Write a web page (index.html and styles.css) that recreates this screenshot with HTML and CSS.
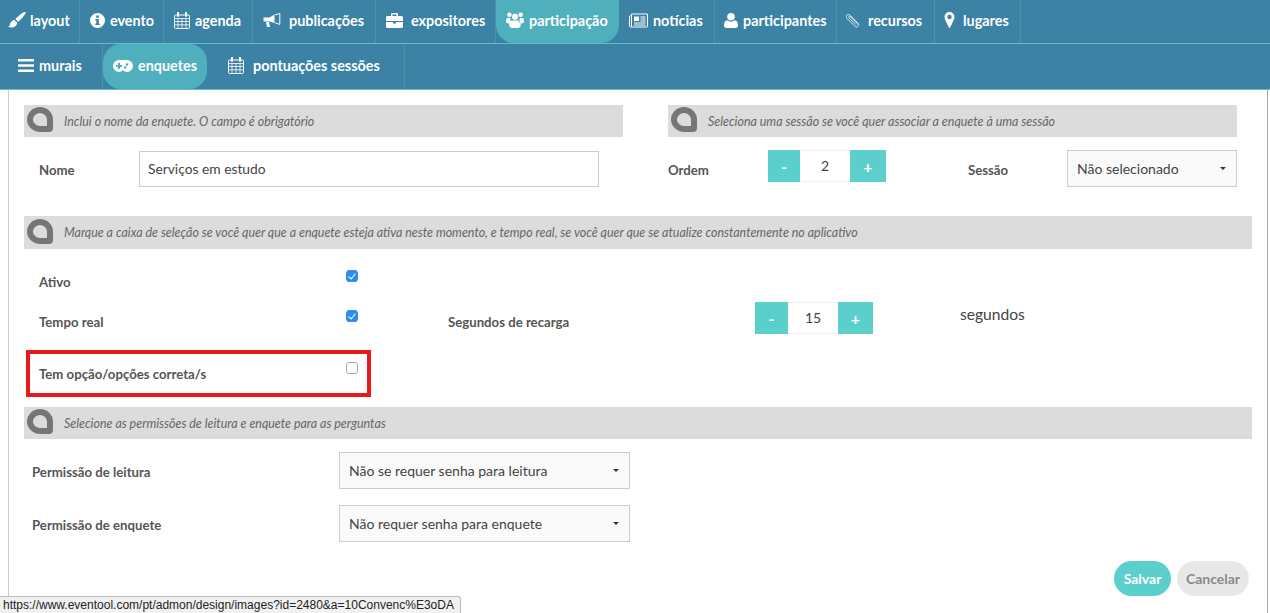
FILE: index.html
```html
<!DOCTYPE html>
<html lang="pt">
<head>
<meta charset="utf-8">
<title>Enquetes</title>
<link rel="stylesheet" href="styles.css">
</head>
<body>
<header>
<nav class="nav nav-main">
<a class="item"><svg class="ic" width="18" height="18" viewBox="0 0 18 18"><path d="M17.600 1.100c.5.500-.6 2.400-2.200 4.400L10.300 10.900 7.300 8.100 12.800 3C15 1.200 17 .5 17.600 1.100zM6.400 9l2.800 2.700c-.3 2.200-1.700 4.100-4.400 4.700-1.500.3-3.400.2-4.800-.6.900-.3 1.500-.8 1.800-1.800.5-1.700.8-4.200 4.600-5z" fill="#fff"/></svg><span>layout</span></a>
<a class="item"><svg class="ic" width="15" height="15" viewBox="0 0 15 15"><path fill-rule="evenodd" d="M7.500 0a7.500 7.500 0 1 1 0 15 7.500 7.500 0 0 1 0-15zM6.200 2.500v2.200h2.600V2.500zM5.300 6v1.400h1v3.200h-1V12h4.400v-1.400h-.9V6z" fill="#fff"/></svg><span>evento</span></a>
<a class="item"><svg class="ic" width="16" height="17" viewBox="0 0 16 17" fill="none" stroke="#fff"><rect x=".5" y="3" width="15" height="13.500" rx="1.200" stroke-width="1"/><path d="M.5 6.500h15M.5 9.500h15M.5 12.800h15M4 6.500v10M8 6.500v10M12 6.500v10" stroke-width=".8"/><path d="M4 .8v3.200M12 .8v3.200" stroke-width="2" stroke-linecap="round"/></svg><span>agenda</span></a>
<a class="item gap-wide"><svg class="ic" width="18" height="15" viewBox="0 0 17 15"><path d="M0 4.500h6L11 1.500v8.500L6 8.500H0zM2.500 9h3l1 5H3.500z" fill="#fff"/><path d="M11.500 1.800 16.300.6v10.800l-4.800-1.600" fill="none" stroke="#fff" stroke-width="1"/></svg><span>publicações</span></a>
<a class="item gap-wide"><svg class="ic" width="17" height="15" viewBox="0 0 17 15"><path fill-rule="evenodd" d="M5 3V1.300C5 .6 5.600 0 6.300 0h4.400c.7 0 1.300.6 1.300 1.300V3h3.500c.8 0 1.500.7 1.500 1.500V8H0V4.500C0 3.700.7 3 1.500 3zM6.400 1.400V3h4.200V1.400z" fill="#fff"/><path d="M0 9h7v1.500h3V9h7v4.500c0 .8-.7 1.500-1.500 1.500h-14C.7 15 0 14.300 0 13.500z" fill="#fff"/></svg><span>expositores</span></a>
<a class="item active"><svg class="ic" width="18" height="16" viewBox="0 0 18 16" fill="#fff"><circle cx="3.400" cy="2.800" r="2.300"/><circle cx="14.600" cy="2.800" r="2.300"/><circle cx="9" cy="4.800" r="3"/><path d="M0 9c0-2 .8-3 2-3h2.200c-.2 1.800.6 3 1.600 3.800C4.200 10.300 3 11 2.700 11.500 1 11.500 0 10.800 0 9zM18 9c0-2-.8-3-2-3h-2.200c.2 1.800-.6 3-1.600 3.800 1.600.5 2.800 1.200 3.100 1.700 1.700 0 2.700-.7 2.700-2.500zM6 8.600h6c1.800 0 2.800 1.500 2.800 4 0 2-1.200 3.400-2.800 3.400H6c-1.600 0-2.800-1.400-2.800-3.400 0-2.500 1-4 2.800-4z"/></svg><span>participação</span></a>
<a class="item"><svg class="ic" width="19" height="15" viewBox="0 0 19 15" fill="none" stroke="#fff"><path d="M2.500 1h16v12.500c0 .3-.2.5-.5.500H2M2.500 1v12c0 .6-.4 1-1 1s-1-.4-1-1V3h2" stroke-width="1"/><path d="M5 3.500h5v4.500H5z" fill="#fff" stroke="none"/><path d="M11.500 4h5M11.500 6h5M11.500 8h5M5 10h11.500M5 12h11.500" stroke-width="1"/></svg><span>notícias</span></a>
<a class="item"><svg class="ic" width="14" height="15" viewBox="0 0 14 15" fill="#fff"><circle cx="7" cy="3.800" r="3.800"/><path d="M3.300 7.300C4.300 8.200 5.600 8.700 7 8.700s2.700-.5 3.700-1.400c2.100.3 3.300 2.200 3.300 5 0 1.700-1 2.700-2.500 2.700h-9C1 15 0 14 0 12.300c0-2.800 1.200-4.700 3.300-5z"/></svg><span>participantes</span></a>
<a class="item gap-wide"><svg class="ic" width="14" height="15" viewBox="0 0 15 15"><path d="M13.800 11.700 4.500 2C3.300.8 1.800.8.900 1.800-.1 2.800 0 4.200 1.200 5.400l8.300 8.300c.9.900 2.300 1 3.100.2.800-.8.700-2.100-.2-3L4.800 3.400c-.5-.5-1.200-.6-1.600-.2-.4.400-.3 1 .2 1.500l7 7.100" fill="none" stroke="#fff" stroke-width=".9"/></svg><span>recursos</span></a>
<a class="item gap-wide"><svg class="ic" width="11" height="16" viewBox="0 0 10 16"><path fill-rule="evenodd" d="M5 0a5 5 0 0 1 5 5c0 1.200-.3 2-.8 3L5.800 15.200c-.3.700-1.300.7-1.600 0L.8 8C.3 7 0 6.200 0 5a5 5 0 0 1 5-5zm0 2.800a2.200 2.200 0 1 0 0 4.400 2.200 2.200 0 0 0 0-4.400z" fill="#fff"/></svg><span>lugares</span></a>
</nav>
<nav class="nav nav-sub">
<a class="item"><svg class="ic" width="16" height="13" viewBox="0 0 16 13" fill="#fff"><rect width="16" height="2.600" rx=".6"/><rect y="5.200" width="16" height="2.600" rx=".6"/><rect y="10.400" width="16" height="2.600" rx=".6"/></svg><span>murais</span></a>
<a class="item active"><svg class="ic" width="20" height="12" viewBox="0 0 20 12"><path fill-rule="evenodd" d="M6 0h8a6 6 0 0 1 0 12c-1.700 0-3-.7-4-2-1 1.300-2.300 2-4 2A6 6 0 0 1 6 0zM5 3v2H3v2h2v2h2V7h2V5H7V3zm9 .3a1.300 1.300 0 1 0 0 2.600 1.300 1.300 0 0 0 0-2.600zm-1.800 2.900a1.300 1.300 0 1 0 0 2.600 1.300 1.300 0 0 0 0-2.600z" fill="#fff"/></svg><span>enquetes</span></a>
<a class="item gap-wide"><svg class="ic" width="16" height="17" viewBox="0 0 16 17" fill="none" stroke="#fff"><rect x=".5" y="3" width="15" height="13.500" rx="1.200" stroke-width="1"/><path d="M.5 6.500h15M.5 9.500h15M.5 12.800h15M4 6.500v10M8 6.500v10M12 6.500v10" stroke-width=".8"/><path d="M4 .8v3.200M12 .8v3.200" stroke-width="2" stroke-linecap="round"/></svg><span>pontuações sessões</span></a>
</nav>
</header>

<main class="panel">
<div class="top-row">
<section>
<p class="bar"><i class="bubble"></i>Inclui o nome da enquete. O campo é obrigatório</p>
<div class="name-row">
<label class="lbl lbl-name">Nome</label>
<input class="text-input" type="text" value="Serviços em estudo">
</div>
</section>
<section>
<p class="bar"><i class="bubble"></i>Seleciona uma sessão se você quer associar a enquete à uma sessão</p>
<div class="order-row">
<label class="lbl lbl-order">Ordem</label>
<div class="stepper"><button class="step step-minus">-</button><span class="step-val">2</span><button class="step step-plus">+</button></div>
<label class="lbl lbl-session">Sessão</label>
<div class="select select-session"><select><option>Não selecionado</option></select></div>
</div>
</section>
</div>

<p class="bar bar-mid"><i class="bubble"></i>Marque a caixa de seleção se você quer que a enquete esteja ativa neste momento, e tempo real, se você quer que se atualize constantemente no aplicativo</p>

<div class="check-row first">
<label class="lbl lbl-check">Ativo</label>
<input class="check" type="checkbox" checked>
</div>
<div class="check-row">
<label class="lbl lbl-check">Tempo real</label>
<input class="check" type="checkbox" checked>
<label class="lbl lbl-reload">Segundos de recarga</label>
<div class="stepper stepper-alt"><button class="step step-minus">-</button><span class="step-val">15</span><button class="step step-plus">+</button></div>
<span class="unit">segundos</span>
</div>
<div class="highlight">
<label class="lbl">Tem opção/opções correta/s</label>
<input class="check" type="checkbox">
</div>

<p class="bar bar-perm"><i class="bubble"></i>Selecione as permissões de leitura e enquete para as perguntas</p>
<div class="perm-row">
<label class="lbl lbl-perm">Permissão de leitura</label>
<div class="select select-perm"><select><option>Não se requer senha para leitura</option></select></div>
</div>
<div class="perm-row second">
<label class="lbl lbl-perm">Permissão de enquete</label>
<div class="select select-perm"><select><option>Não requer senha para enquete</option></select></div>
</div>
<div class="actions">
<button class="btn btn-save">Salvar</button>
<button class="btn btn-cancel">Cancelar</button>
</div>
</main>
<div class="status">https://www.eventool.com/pt/admon/design/images?id=2480&amp;a=10Convenc%E3oDA</div>
</body>
</html>
```

FILE: styles.css
```css
* { box-sizing: border-box; }
html, body { margin: 0; height: 613px; overflow: hidden; background: #fff; }
body { font-family: "Lato", sans-serif; color: #555; }

.nav { display: grid; background: #3b82a5; border-bottom: 1px solid #5fc0cb; }
.nav-main { height: 44px; grid-template-columns: 80px 84px 89px 123px 120px 124px 95px 122px 98px 86px; }
.nav-sub { height: 46px; grid-template-columns: 103px 105px 197px; }

.item { display: flex; align-items: center; gap: 5px; padding: 0 0 3px 10px; color: #fff; font: 700 14.400px "Lato", sans-serif; border-right: 1px solid #4e90b0; white-space: nowrap; }
.nav-main .item:first-child { padding-left: 8px; gap: 4px; }
.nav-main .item:nth-child(n+7) { padding-left: 9px; }
.nav-sub .item { padding-bottom: 2px; }
.nav-sub .item:first-child { padding-left: 18px; }
.nav-sub .item.gap-wide { padding-left: 20px; gap: 9px; }
.gap-wide { gap: 8px; }
.item.active { margin-right: 1px; background: #4fafbc; border-radius: 0 0 18px 18px; border-right: 0; }
.nav-sub .item.active { border-radius: 18px; }
.ic { flex: none; }

.panel { height: 523px; margin: 0 2px 0 8px; padding: 15px 15px 0; border-left: 1px solid #ccc; border-right: 1px solid #aaa; }
.top-row { display: grid; grid-template-columns: 599px 569px; column-gap: 45px; }

.bar { display: flex; align-items: center; height: 32px; margin: 0; background: #dcdcdc; font-size: 12.450px; font-style: italic; color: #666; white-space: nowrap; }
.bubble { flex: none; width: 26px; height: 25px; margin: -3px 11px 0 3px; border: 6px solid #767676; border-radius: 50% 50% 4px 50%; }

.lbl { display: block; font-size: 13.200px; font-weight: 700; color: #555; }

.name-row { display: flex; align-items: center; margin-top: 14px; padding-left: 15px; }
.lbl-name { width: 100px; margin-top: 2px; }
.text-input { width: 460px; height: 36px; padding: 0 8px 2px; border: 1px solid #ccc; background: #fff; font: 13.800px "Lato", sans-serif; color: #444; }

.order-row { display: flex; align-items: flex-start; margin-top: 13px; }
.lbl-order { width: 100px; margin-top: 12px; }
.lbl-session { width: 99px; margin: 12px 0 0 82px; }

.stepper { display: flex; width: 118px; height: 32px; }
.step { flex: none; padding: 0; border: 0; background: #5bcfcb; color: #fff; font: 700 16px "Lato", sans-serif; }
.step-minus { width: 32px; }
.step-plus { width: 36px; }
.stepper-alt .step-minus { width: 33px; }
.stepper-alt .step-plus { width: 35px; }
.step-val { flex: 1; line-height: 30px; text-align: center; font-size: 14px; color: #444; border: solid #eee; border-width: 1px 0; }

.select { position: relative; height: 37px; }
.select select { width: 100%; height: 100%; padding: 0 9px; appearance: none; border: 1px solid #ccc; border-radius: 0; background: #fafafa; font: 14px "Lato", sans-serif; color: #444; }
.select::after { content: ""; position: absolute; right: 11px; top: 17px; border: 3px solid transparent; border-top-color: #333; border-bottom: 0; }
.select-session { width: 170px; }
.select-perm { width: 291px; }

.bar-mid { height: 33px; margin-top: 29px; }

.check-row { display: flex; height: 40px; padding-left: 15px; }
.check-row.first { margin-top: 13px; }
.lbl-check { width: 307px; margin-top: 12px; }
.lbl-reload { width: 307px; margin-top: 12px; }
.check { flex: none; width: 12px; height: 12px; margin: 8px 0 0; appearance: none; position: relative; border: 1px solid #aaa; border-radius: 3px; background: #fff; }
.check:checked { border-color: #2f8fee; background: #2f8fee; }
.check:checked::after { content: ""; position: absolute; left: 3px; top: 1px; width: 3px; height: 6px; border: solid #fff; border-width: 0 1.500px 1.500px 0; transform: rotate(40deg); }
.check-row .check { margin-right: 90px; }
.unit { margin: 3px 0 0 87px; font-size: 15.600px; color: #444; }

.highlight { display: flex; align-items: center; width: 345px; height: 47px; margin: 8px 0 0 2px; padding-left: 9px; border: 4px solid #e8191b; }
.highlight .lbl { width: 307px; }
.highlight .check { align-self: flex-start; margin: 8px 0 0; }

.bar-perm { margin-top: 10px; }

.perm-row { display: flex; align-items: center; margin-top: 13px; padding-left: 8px; }
.perm-row.second { margin-top: 16px; }
.lbl-perm { width: 307px; margin-top: 3px; }

.actions { display: flex; justify-content: flex-end; gap: 6px; margin-top: 19px; padding-right: 3px; }
.btn { height: 35px; padding: 0; border: 0; border-radius: 18px; font: 700 14px "Lato", sans-serif; }
.btn-save { width: 57px; background: #5bcfcb; color: #fff; }
.btn-cancel { width: 72px; background: #e8e8e8; color: #888; }

.status { position: fixed; left: 0; bottom: 0; width: 461px; height: 17px; padding: 1px 3px; background: #f1f1f1; border: solid #bbb; border-width: 1px 1px 0 0; border-top-right-radius: 3px; font: 12px/14px "Liberation Sans", sans-serif; color: #222; white-space: nowrap; }
```
